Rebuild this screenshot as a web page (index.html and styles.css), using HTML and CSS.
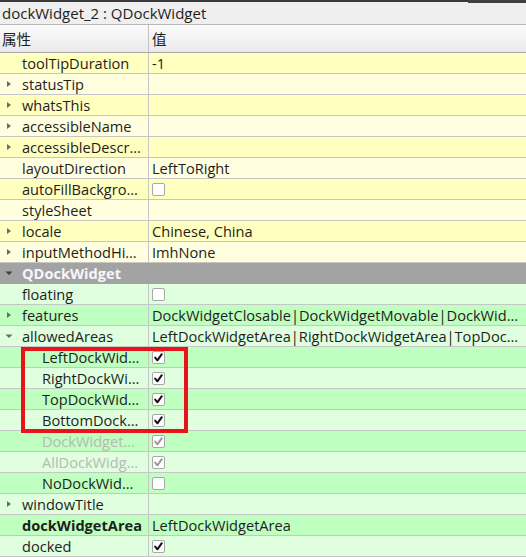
FILE: index.html
```html
<!DOCTYPE html>
<html>
<head>
<meta charset="utf-8">
<link rel="stylesheet" href="styles.css">
</head>
<body>
<div class="panel">
  <div class="topline"><div class="tl-left"></div><div class="tl-right"></div></div>
  <div class="title">dockWidget_2 : QDockWidget</div>
  <div class="header">
    <div class="h-name">属性</div>
    <div class="h-val">值</div>
  </div>
  <div class="rows">
    <div class="row y1"><div class="name"><span class="br"></span><span class="txt">toolTipDuration</span></div><div class="val">-1</div></div>
    <div class="row y2"><div class="name"><span class="br"><svg class="tri" viewBox="0 0 8 8"><polygon points="2,1 6,4 2,7"/></svg></span><span class="txt">statusTip</span></div><div class="val"></div></div>
    <div class="row y1"><div class="name"><span class="br"><svg class="tri" viewBox="0 0 8 8"><polygon points="2,1 6,4 2,7"/></svg></span><span class="txt">whatsThis</span></div><div class="val"></div></div>
    <div class="row y2"><div class="name"><span class="br"><svg class="tri" viewBox="0 0 8 8"><polygon points="2,1 6,4 2,7"/></svg></span><span class="txt">accessibleName</span></div><div class="val"></div></div>
    <div class="row y1"><div class="name"><span class="br"><svg class="tri" viewBox="0 0 8 8"><polygon points="2,1 6,4 2,7"/></svg></span><span class="txt">accessibleDescr…</span></div><div class="val"></div></div>
    <div class="row y2"><div class="name"><span class="br"></span><span class="txt">layoutDirection</span></div><div class="val">LeftToRight</div></div>
    <div class="row y1"><div class="name"><span class="br"></span><span class="txt">autoFillBackgro…</span></div><div class="val"><span class="cb"></span></div></div>
    <div class="row y2"><div class="name"><span class="br"></span><span class="txt">styleSheet</span></div><div class="val"></div></div>
    <div class="row y1"><div class="name"><span class="br"><svg class="tri" viewBox="0 0 8 8"><polygon points="2,1 6,4 2,7"/></svg></span><span class="txt">locale</span></div><div class="val">Chinese, China</div></div>
    <div class="row y2"><div class="name"><span class="br"><svg class="tri" viewBox="0 0 8 8"><polygon points="2,1 6,4 2,7"/></svg></span><span class="txt">inputMethodHi…</span></div><div class="val">ImhNone</div></div>
    <div class="row group"><div class="gname"><span class="br"><svg class="tri dk" viewBox="0 0 8 8"><polygon points="0.5,2.5 7.5,2.5 4,6"/></svg></span><span class="txt">QDockWidget</span></div></div>
    <div class="row g2"><div class="name"><span class="br"></span><span class="txt">floating</span></div><div class="val"><span class="cb"></span></div></div>
    <div class="row g1"><div class="name"><span class="br"><svg class="tri" viewBox="0 0 8 8"><polygon points="2,1 6,4 2,7"/></svg></span><span class="txt">features</span></div><div class="val">DockWidgetClosable|DockWidgetMovable|DockWid…</div></div>
    <div class="row g2"><div class="name"><span class="br"><svg class="tri" viewBox="0 0 8 8"><polygon points="0.5,2.5 7.5,2.5 4,6"/></svg></span><span class="txt">allowedAreas</span></div><div class="val">LeftDockWidgetArea|RightDockWidgetArea|TopDoc…</div></div>
    <div class="row g1"><div class="name sub"><span class="txt">LeftDockWid…</span></div><div class="val"><span class="cb on"><svg viewBox="0 0 13 13"><path d="M3.2 6.6 L5.4 9.3 L9.8 3.2"/></svg></span></div></div>
    <div class="row g2"><div class="name sub"><span class="txt">RightDockWi…</span></div><div class="val"><span class="cb on"><svg viewBox="0 0 13 13"><path d="M3.2 6.6 L5.4 9.3 L9.8 3.2"/></svg></span></div></div>
    <div class="row g1"><div class="name sub"><span class="txt">TopDockWid…</span></div><div class="val"><span class="cb on"><svg viewBox="0 0 13 13"><path d="M3.2 6.6 L5.4 9.3 L9.8 3.2"/></svg></span></div></div>
    <div class="row g2"><div class="name sub"><span class="txt">BottomDock…</span></div><div class="val"><span class="cb on"><svg viewBox="0 0 13 13"><path d="M3.2 6.6 L5.4 9.3 L9.8 3.2"/></svg></span></div></div>
    <div class="row g1 off"><div class="name sub"><span class="txt">DockWidget…</span></div><div class="val"><span class="cb on"><svg viewBox="0 0 13 13"><path d="M3.2 6.6 L5.4 9.3 L9.8 3.2"/></svg></span></div></div>
    <div class="row g2 off"><div class="name sub"><span class="txt">AllDockWidg…</span></div><div class="val"><span class="cb on"><svg viewBox="0 0 13 13"><path d="M3.2 6.6 L5.4 9.3 L9.8 3.2"/></svg></span></div></div>
    <div class="row g1"><div class="name sub"><span class="txt">NoDockWid…</span></div><div class="val"><span class="cb"></span></div></div>
    <div class="row g2"><div class="name"><span class="br"><svg class="tri" viewBox="0 0 8 8"><polygon points="2,1 6,4 2,7"/></svg></span><span class="txt">windowTitle</span></div><div class="val"></div></div>
    <div class="row g1"><div class="name"><span class="br"></span><span class="txt bold">dockWidgetArea</span></div><div class="val">LeftDockWidgetArea</div></div>
    <div class="row g2"><div class="name"><span class="br"></span><span class="txt">docked</span></div><div class="val"><span class="cb on"><svg viewBox="0 0 13 13"><path d="M3.2 6.6 L5.4 9.3 L9.8 3.2"/></svg></span></div></div>
  </div>
  <div class="highlight"></div>
</div>
</body>
</html>
```

FILE: styles.css
```css
* { box-sizing: border-box; }
html, body { margin: 0; padding: 0; }
body {
  width: 526px;
  height: 557px;
  overflow: hidden;
  background: #ffffff;
  font-family: "Open Sans", "Noto Sans CJK SC", sans-serif;
  font-size: 14.6px;
  color: #1e1e1e;
}
.panel { position: relative; width: 526px; }
.topline { display: flex; align-items: flex-start; height: 2px; overflow: visible; position: relative; z-index: 1; }
.tl-left { flex: 1; height: 2px; background: #3a3a3a; }
.tl-right { width: 58px; height: 3px; background: #404040; }
.title {
  height: 23px;
  background: #efefef;
  border-bottom: 1px solid #b6b6b6;
  padding-left: 2px;
  line-height: 23px;
  font-size: 15px;
  white-space: nowrap;
}
.header {
  display: flex;
  height: 28px;
  background: linear-gradient(#fbfbfb, #f4f4f4 45%, #eaeaea);
  border-bottom: 1px solid #a9a9a9;
  line-height: 28px;
  font-family: "Noto Sans CJK SC", sans-serif;
  font-size: 14.6px;
}
.h-name { width: 149px; padding-left: 2px; border-right: 1px solid #c2c2c2; }
.h-val { padding-left: 3px; }
.rows { display: flex; flex-direction: column; }
.row {
  display: flex;
  height: 21px;
  border-bottom: 1px solid #c6c6c6;
  line-height: 21px;
  white-space: nowrap;
}
.y1 { background: #ffffbf; }
.y2 { background: #ffffdf; }
.g1 { background: #bfffbf; }
.g2 { background: #dfffdf; }
.group { background: #a3a3a3; border-bottom-color: #a3a3a3; }
.name {
  display: flex;
  align-items: center;
  width: 149px;
  flex: none;
  border-right: 1px solid #c6c6c6;
  overflow: hidden;
}
.gname { display: flex; align-items: center; }
.name.sub { padding-left: 42px; }
.br { width: 22px; flex: none; display: flex; align-items: center; padding-left: 5px; }
.tri { width: 8px; height: 8px; fill: #6a6a6a; }
.tri.dk { fill: #3c3c3c; }
.txt { overflow: hidden; }
.bold { font-weight: 700; }
.group .txt { font-weight: 700; color: #f6f6fb; }
.val {
  flex: 1;
  display: flex;
  align-items: center;
  padding-left: 3px;
  overflow: hidden;
}
.off .txt { color: #b8b8b8; }
.cb {
  width: 13px;
  height: 13px;
  background: #ffffff;
  border: 1px solid #a8a8a8;
  border-radius: 2px;
  display: block;
}
.cb svg { display: block; width: 13px; height: 13px; margin: -1px 0 0 -1px; }
.cb path { fill: none; stroke: #111; stroke-width: 2; stroke-linecap: round; stroke-linejoin: round; }
.off .cb path { stroke: #9a9a9a; }
.highlight {
  position: absolute;
  left: 21px;
  top: 347px;
  width: 167px;
  height: 86px;
  border: 4px solid #e8141c;
  pointer-events: none;
}
```
